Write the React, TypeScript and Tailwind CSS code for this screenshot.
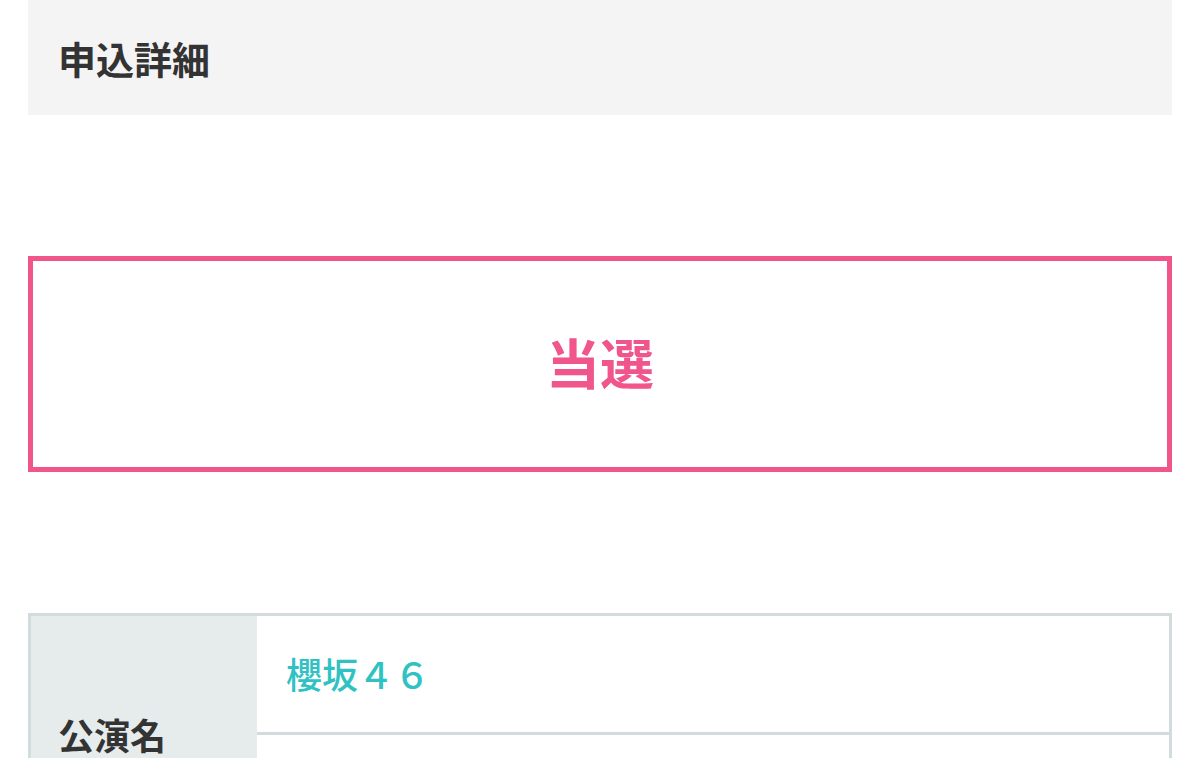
export default function App() {
  return (
    <main
      className="min-h-screen bg-white px-[28px] text-[#333]"
      style={{ fontFamily: '"Noto Sans CJK JP", "Noto Sans", sans-serif' }}
    >
      {/* ── Page title ───────────────────────── */}
      <div className="flex h-[115px] items-center bg-[#f4f4f4] px-[30px]">
        <h1 className="text-[38px] font-bold leading-none">申込詳細</h1>
      </div>

      {/* ── Result box ───────────────────────── */}
      <div className="mt-[141px] flex h-[216px] items-center justify-center border-[5px] border-[#f0558b]">
        <p className="-mt-[4px] text-[54px] font-bold leading-none text-[#f0558b]">当選</p>
      </div>

      {/* ── Detail table ─────────────────────── */}
      <div className="mt-[141px] grid grid-cols-[226px_1fr] border-[3px] border-[#d3dcdc]">
        <div className="row-span-2 flex items-center bg-[#e6ecec] px-[27px]">
          <span className="text-[36px] font-bold leading-none">公演名</span>
        </div>
        <div className="flex h-[116px] items-center px-[29px]">
          <span className="-mt-[3px] text-[36px] font-medium leading-none text-[#30c2c2]">櫻坂４６</span>
        </div>
        <div className="flex h-[119px] items-center border-t-[3px] border-[#d3dcdc] px-[29px]">
          <span className="text-[30px] leading-none text-[#333]"></span>
        </div>
      </div>
    </main>
  );
}
